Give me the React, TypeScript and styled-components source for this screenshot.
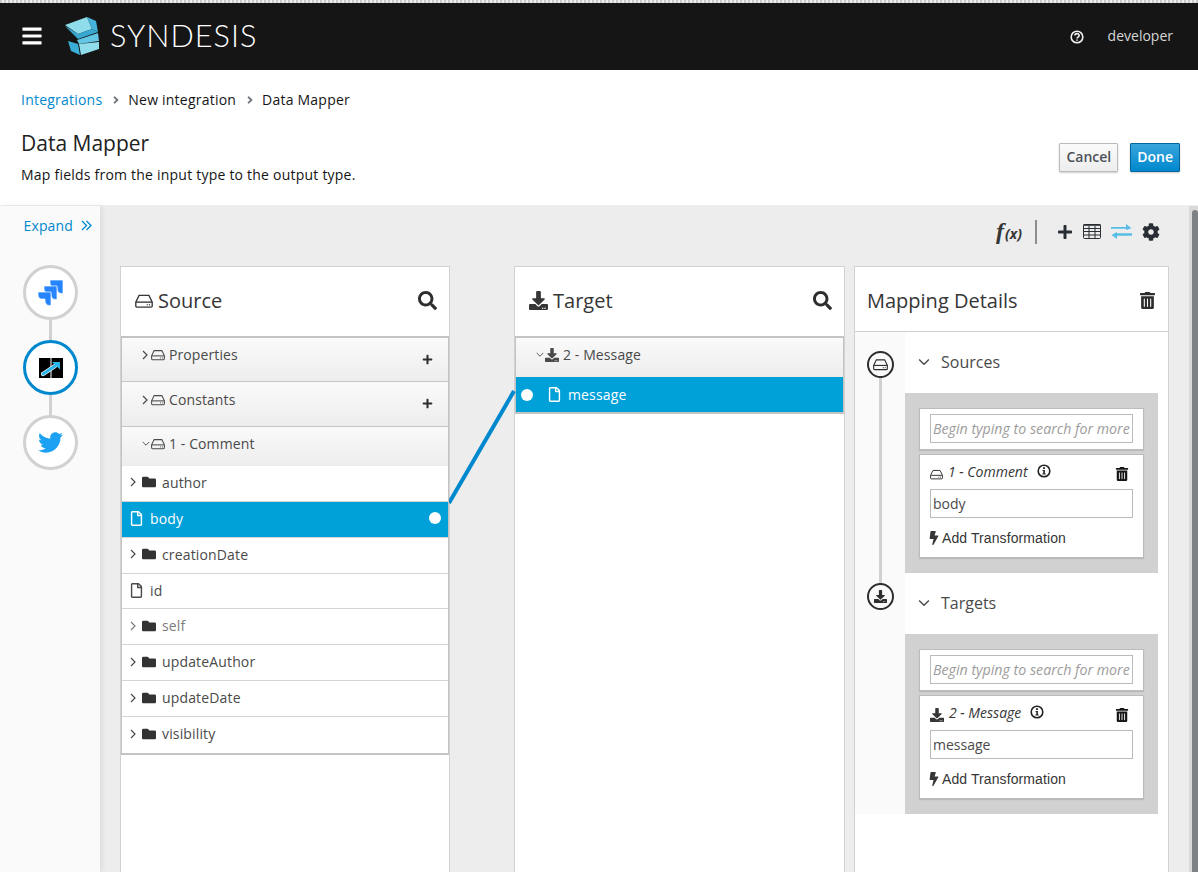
import React from "react";
import styled, { createGlobalStyle } from "styled-components";
import { FaBars, FaBolt, FaCog, FaDownload, FaFolder, FaPlus, FaRegFile, FaSearch, FaTrashAlt, FaTwitter, FaAngleRight } from "react-icons/fa";

const GlobalStyle = createGlobalStyle`
  html, body {
    margin: 0;
    height: 100%;
    overflow: hidden;
    background: #fff;
    font-family: "Open Sans", "Liberation Sans", sans-serif;
    color: #363636;
  }
  * { box-sizing: border-box; }
`;

const Page = styled.div`
  position: relative;
  width: 1198px;
  height: 872px;
  overflow: hidden;
  display: flex;
  flex-direction: column;
`;

const TopStrip = styled.div`
  height: 3px;
  background: repeating-linear-gradient(90deg, #c8c8c8 0 2px, #eeeeee 2px 4px);
`;

const NavBar = styled.header`
  height: 67px;
  flex: none;
  background: #151515;
  display: flex;
  align-items: center;
  padding: 0 25px 2px 21px;
  color: #fff;
`;

const Burger = styled.span`
  display: flex;
  font-size: 22px;
  margin-right: 21px;
`;

const Brand = styled.span`
  font-family: "Lato", "Open Sans", sans-serif;
  font-weight: 300;
  font-size: 30.7px;
  letter-spacing: 1px;
  margin-left: 10px;
  color: #fff;
`;

const NavRight = styled.div`
  margin-left: auto;
  display: flex;
  align-items: center;
  gap: 24px;
  font-size: 14px;
  color: #d6d6d6;
  svg { margin-top: 3px; }
`;

const PageHead = styled.div`
  height: 136px;
  flex: none;
  padding: 21px 18px 0 21px;
  border-bottom: 1px solid #f0f0f0;
`;

const Crumbs = styled.nav`
  display: flex;
  align-items: center;
  height: 18px;
  font-size: 14px;
  line-height: 18px;
  letter-spacing: 0.22px;
  color: #151515;
  svg { color: #72767b; font-size: 12px; margin: 0 6px 0 8px; }
`;

const CrumbLink = styled.a`
  color: #0088ce;
`;

const TitleRow = styled.div`
  display: flex;
  justify-content: space-between;
  align-items: flex-start;
  margin-top: 20px;
`;

const Title = styled.h1`
  margin: 0;
  font-size: 21px;
  line-height: 28px;
  font-weight: 400;
  color: #222;
`;

const Subtitle = styled.p`
  margin: 9px 0 0;
  font-size: 14px;
  line-height: 18px;
  letter-spacing: 0.22px;
  color: #151515;
`;

const Buttons = styled.div`
  display: flex;
  gap: 12px;
  margin-top: 14px;
`;

const Button = styled.button<{ $primary?: boolean }>`
  height: 29px;
  padding: 0 6px 2px;
  font: 600 14px "Open Sans", sans-serif;
  border-radius: 1px;
  border: 1px solid ${(p) => (p.$primary ? "#00659c" : "#bbb")};
  color: ${(p) => (p.$primary ? "#fff" : "#4d5258")};
  background: ${(p) => (p.$primary ? "linear-gradient(#39a5dc, #0088ce)" : "linear-gradient(#fafafa, #ededed)")};
  box-shadow: 0 1px 2px rgba(0, 0, 0, 0.2);
`;

const Body = styled.div`
  flex: 1;
  display: flex;
  min-height: 0;
`;

const Rail = styled.aside`
  width: 100px;
  flex: none;
  background: #fafafa;
  padding-top: 10px;
  display: flex;
  flex-direction: column;
  align-items: center;
  box-shadow: 2px 0 6px rgba(0, 0, 0, 0.08);
  z-index: 1;
`;

const Expand = styled.div`
  width: 100%;
  display: flex;
  align-items: center;
  justify-content: flex-end;
  gap: 8px;
  padding-right: 8px;
  height: 18px;
  font-size: 14px;
  letter-spacing: 0.15px;
  color: #0088ce;
  margin-bottom: 31px;
`;

const Step = styled.div<{ $active?: boolean }>`
  width: 55px;
  height: 55px;
  margin-left: 1px;
  border-radius: 50%;
  background: #fff;
  border: 3px solid ${(p) => (p.$active ? "#0088ce" : "#d1d1d1")};
  display: flex;
  align-items: center;
  justify-content: center;
`;

const StepLink = styled.div`
  width: 3px;
  height: 21px;
  margin-left: 1px;
  background: #d1d1d1;
  margin-top: -0.5px;
  margin-bottom: -0.5px;
`;

const Workspace = styled.main`
  flex: 1;
  background: #ededed;
  position: relative;
  min-width: 0;
`;

const Toolbar = styled.div`
  height: 60px;
  display: flex;
  align-items: center;
  justify-content: flex-end;
  padding: 0 38px 9px 0;
  color: #292e34;
`;

const Fx = styled.span`
  font: italic 700 24px "Liberation Serif", serif;
  display: flex;
  align-items: baseline;
  color: #363636;
  small { font: italic 700 14px "Open Sans", sans-serif; margin-left: 1px; }
`;

const ToolDivider = styled.span`
  width: 2px;
  height: 24px;
  background: #8b8d8f;
  margin: 0 20px 0 13px;
`;

const ToolIcons = styled.div`
  display: flex;
  align-items: center;
  gap: 10px;
`;

const Columns = styled.div`
  display: flex;
  align-items: flex-start;
  padding-left: 20px;
`;

const Panel = styled.section<{ $w: number; $ml?: number }>`
  width: ${(p) => p.$w}px;
  margin-left: ${(p) => p.$ml ?? 0}px;
  height: 640px;
  background: #fff;
  border: 1px solid #d1d1d1;
  flex: none;
`;

const PanelHead = styled.div<{ $h?: number; $pl?: number; $pt?: number; $pb?: number }>`
  height: ${(p) => p.$h ?? 69}px;
  display: flex;
  align-items: center;
  padding: ${(p) => p.$pt ?? 0}px 12px ${(p) => p.$pb ?? 2}px ${(p) => p.$pl ?? 14}px;
  font-size: 20px;
  color: #363636;
  gap: 5px;
`;

const HeadAction = styled.span`
  margin-left: auto;
  display: flex;
  color: #2e2e2e;
`;

const Tree = styled.div`
  border: 1px solid #c4c4c4;
  border-width: 2px 1px;
  background: #fff;
`;

const Group = styled.div<{ $h: number; $pt?: number; $last?: boolean }>`
  height: ${(p) => p.$h}px;
  background: linear-gradient(#fafafa, #ededed);
  border-bottom: ${(p) => (p.$last ? "none" : "1px solid #c4c4c4")};
  padding: ${(p) => p.$pt ?? 7}px 15px 0 20px;
  display: flex;
  align-items: flex-start;
  font-size: 14px;
  line-height: 20px;
  letter-spacing: 0.1px;
  color: #4a4a4a;
`;

const GroupIcon = styled.span<{ $open?: boolean }>`
  display: inline-flex;
  align-items: center;
  height: 20px;
  gap: ${(p) => (p.$open ? 1 : 3)}px;
  margin-right: 4px;
`;

const GroupPlus = styled.span<{ $mt: number }>`
  margin-left: auto;
  margin-top: ${(p) => p.$mt}px;
  display: flex;
  color: #2e2e2e;
`;

const FieldRow = styled.div<{ $selected?: boolean; $muted?: boolean; $h?: number; $pl?: number; $pb?: number }>`
  height: ${(p) => p.$h ?? 35.86}px;
  display: flex;
  align-items: center;
  font-size: 14px;
  letter-spacing: 0.15px;
  padding: 0 7px ${(p) => p.$pb ?? 2}px ${(p) => p.$pl ?? 8}px;
  gap: 7px;
  background: ${(p) => (p.$selected ? "#00a0d9" : "#fff")};
  color: ${(p) => (p.$selected ? "#fff" : p.$muted ? "#7b7b7b" : "#4a4a4a")};
  border-bottom: 1px solid #d4d4d4;
  &:last-child { border-bottom: none; }
`;

const Dot = styled.span<{ $right?: boolean }>`
  width: 12px;
  height: 12px;
  border-radius: 50%;
  background: #fff;
  flex: none;
  margin-left: ${(p) => (p.$right ? "auto" : "0")};
`;

const FolderGlyph = styled(FaFolder)`
  color: #333;
  font-size: 14px;
  margin-left: -1px;
  margin-right: -1px;
`;

const FileGlyph = styled(FaRegFile)<{ $ml?: number }>`
  font-size: 15px;
  margin: 0 -1px 0 ${(p) => p.$ml ?? -1}px;
`;

const DetailBody = styled.div`
  display: flex;
  height: 483px;
  border-top: 1px solid #d1d1d1;
`;

const Timeline = styled.div`
  width: 50px;
  flex: none;
  background: #fafafa;
  position: relative;
`;

const TimelineLine = styled.div`
  position: absolute;
  left: 24px;
  top: 30px;
  width: 3px;
  height: 226px;
  background: #d1d1d1;
`;

const TimelineNode = styled.span<{ $top: number }>`
  position: absolute;
  left: 12px;
  top: ${(p) => p.$top}px;
  width: 27px;
  height: 27px;
  border-radius: 50%;
  background: #fafafa;
  border: 2px solid #2e2e2e;
  display: flex;
  align-items: center;
  justify-content: center;
  color: #2e2e2e;
`;

const DetailColumn = styled.div`
  width: 253px;
`;

const SectionHead = styled.div`
  height: 61px;
  display: flex;
  align-items: center;
  padding: 0 0 2px 13px;
  gap: 11px;
  font-size: 16px;
  color: #4a4a4a;
`;

const GrayBox = styled.div`
  height: 180px;
  background: #d1d1d1;
  padding: 15px 14px;
`;

const Card = styled.div<{ $mt?: number; $h: number }>`
  background: #fff;
  border: 1px solid #bbb;
  height: ${(p) => p.$h}px;
  margin-top: ${(p) => p.$mt ?? 0}px;
  padding: 5px 10px;
  box-shadow: 0 1px 1px rgba(0, 0, 0, 0.1);
`;

const FieldBox = styled.div<{ $placeholder?: boolean }>`
  height: 29px;
  border: 1px solid #bbb;
  padding: 0 2px 1px;
  display: flex;
  align-items: center;
  white-space: nowrap;
  overflow: hidden;
  font-size: ${(p) => (p.$placeholder ? "14.2px" : "14px")};
  font-style: ${(p) => (p.$placeholder ? "italic" : "normal")};
  color: ${(p) => (p.$placeholder ? "#9c9c9c" : "#4a4a4a")};
`;

const DocRow = styled.div`
  height: 29px;
  display: flex;
  align-items: center;
  padding-bottom: 6px;
  font-size: 14px;
  font-style: italic;
  color: #363636;
  i { font-style: inherit; margin: 0 9px 0 5px; }
`;

const DocIcon = styled.span`
  display: flex;
  margin-top: 5px;
`;

const DocInfo = styled.span`
  display: flex;
  margin-top: -2px;
`;

const DocTrash = styled.span`
  margin-left: auto;
  margin-right: 4px;
  margin-top: 4px;
  display: flex;
  color: #151515;
`;

const AddTransform = styled.div`
  display: flex;
  align-items: center;
  gap: 1px;
  height: 20px;
  margin-top: 10px;
  font: 14px "Liberation Sans", sans-serif;
  letter-spacing: 0.1px;
  color: #363636;
  svg { margin-left: -3px; }
`;

const Scrollbar = styled.div`
  position: absolute;
  right: 0;
  top: 0;
  bottom: 0;
  width: 9px;
  background: #d9d9d9;
  &::after {
    content: "";
    display: block;
    margin: 4px 0 0 3px;
    width: 6px;
    height: 100%;
    border-radius: 4px 4px 0 0;
    background: #7e8284;
  }
`;

const Connector = styled.svg`
  position: absolute;
  left: 349px;
  top: 182px;
  pointer-events: none;
`;

const Drive = ({ size = 15 }: { size?: number }) => (
  <svg width={size} height={size} viewBox="0 0 16 16" fill="none" stroke="currentColor" strokeWidth="1.2">
    <path d="M3.6 3h8.8l2.9 6v3.4a1 1 0 0 1-1 1H1.7a1 1 0 0 1-1-1V9z" />
    <path d="M.8 9h14.4" />
    <path d="M10.5 11.3h.8M12.6 11.3h.8" strokeWidth="1.4" />
  </svg>
);

const ChevronRight = () => (
  <svg width="6" height="10" viewBox="0 0 6 10" fill="none" stroke="currentColor" strokeWidth="1.2">
    <path d="M1 1l4 4-4 4" />
  </svg>
);

const ChevronDown = ({ w = 8 }: { w?: number }) => (
  <svg width={w} height={w * 0.65} viewBox="0 0 12 8" fill="none" stroke="currentColor" strokeWidth="1.4">
    <path d="M1 1.5l5 5 5-5" />
  </svg>
);

const DoubleChevron = () => (
  <svg width="11" height="11" viewBox="0 0 11 11" fill="none" stroke="currentColor" strokeWidth="1.3">
    <path d="M1 1l4.5 4.5L1 10M5.5 1L10 5.5 5.5 10" />
  </svg>
);

const Info = () => (
  <svg width="14" height="14" viewBox="0 0 14 14">
    <circle cx="7" cy="7" r="5.8" fill="none" stroke="#222" strokeWidth="1.6" />
    <rect x="6.1" y="3.2" width="1.8" height="1.8" fill="#222" />
    <path d="M5.6 6h2.3v3.4h.8v1H5.4v-1h.9V7h-.7z" fill="#222" />
  </svg>
);

const Question = () => (
  <svg width="14" height="14" viewBox="0 0 13 13" fill="none" stroke="#f0f0f0" strokeWidth="1.5">
    <circle cx="6.5" cy="6.5" r="5.4" />
    <path d="M4.6 5.2c0-2.4 3.9-2.4 3.9 0 0 1.4-2 1.3-2 2.7" />
    <path d="M6.5 8.8v1.2" />
  </svg>
);

const Logo = () => (
  <svg width="36" height="38" viewBox="0 0 36 38">
    <polygon points="1,8 23,0 28,12 14,17" fill="#8fdcea" />
    <polygon points="23,0 32,4 34,15 28,12" fill="#46b4da" />
    <polygon points="1,9 14,17 28,12 34,15 14,22" fill="#38a8d2" />
    <polygon points="13,23 34,16 35,24 15,27" fill="#62c6e4" />
    <polygon points="4,24 14,27 16,38 7,34" fill="#3aaed6" />
    <polygon points="15,27 35,25 35,32 17,38" fill="#8fdcea" />
  </svg>
);

const JiraPiece = ({ x, y }: { x: number; y: number }) => (
  <path
    transform={`translate(${x} ${y})`}
    d="M0 0H13V13.5H11.5C9 13.5 7 11.5 7 9V7H3.5C1.5 7 0 5 0 3z"
    fill="#2684ff"
    stroke="#fff"
    strokeWidth="0.7"
  />
);

const JiraMark = () => (
  <svg width="25" height="26" viewBox="0 0 25 26">
    <JiraPiece x={12} y={0} />
    <JiraPiece x={6} y={6} />
    <JiraPiece x={0} y={12} />
  </svg>
);

const MapperMark = () => (
  <svg width="24" height="20" viewBox="0 0 24 20">
    <path d="M0 0h11.5v20H0zM12.5 0H24v20H12.5z" fill="#000" />
    <path d="M4 16 16 8" stroke="#fff" strokeWidth="4.2" strokeLinecap="round" />
    <path d="M4 16 16 8" stroke="#29b6ea" strokeWidth="3" strokeLinecap="round" />
    <path d="M13 4h8v7.5z" fill="#29b6ea" />
  </svg>
);

const TableGlyph = () => (
  <svg width="18" height="15" viewBox="0 0 18 15" fill="none" stroke="#292e34" strokeWidth="1">
    <rect x="0.5" y="0.5" width="17" height="14" rx="1" />
    <path d="M0.5 1h17" strokeWidth="1.6" />
    <path d="M0.5 4.5h17M0.5 7.5h17M0.5 11h17M6 2v12.5M12 2v12.5" />
  </svg>
);

const SwapGlyph = () => (
  <svg width="21" height="15" viewBox="0 0 21 15" fill="#57bde6">
    <path d="M0 3h15V0l5.5 4.2L15 6V4.8H0zM21 9.2H6V8L.5 11 6 15v-3.2h15z" />
  </svg>
);

const sourceFields = [
  { name: "author", folder: true },
  { name: "body", selected: true },
  { name: "creationDate", folder: true },
  { name: "id" },
  { name: "self", folder: true, muted: true },
  { name: "updateAuthor", folder: true },
  { name: "updateDate", folder: true },
  { name: "visibility", folder: true },
];

const DetailCards = ({ doc, field, icon }: { doc: string; field: string; icon: React.ReactNode }) => (
  <GrayBox>
    <Card $h={42}>
      <FieldBox $placeholder>Begin typing to search for more</FieldBox>
    </Card>
    <Card $mt={4} $h={104}>
      <DocRow>
        <DocIcon>{icon}</DocIcon>
        <i>{doc}</i>
        <DocInfo>
          <Info />
        </DocInfo>
        <DocTrash>
          <FaTrashAlt size={14} />
        </DocTrash>
      </DocRow>
      <FieldBox>{field}</FieldBox>
      <AddTransform>
        <FaBolt size={14} />
        Add Transformation
      </AddTransform>
    </Card>
  </GrayBox>
);

export default function App() {
  return (
    <Page>
      <GlobalStyle />
      <TopStrip />
      <NavBar>
        <Burger>
          <FaBars />
        </Burger>
        <Logo />
        <Brand>SYNDESIS</Brand>
        <NavRight>
          <Question />
          <span>developer</span>
        </NavRight>
      </NavBar>
      <PageHead>
        <Crumbs>
          <CrumbLink>Integrations</CrumbLink>
          <FaAngleRight />
          New integration
          <FaAngleRight />
          Data Mapper
        </Crumbs>
        <TitleRow>
          <div>
            <Title>Data Mapper</Title>
            <Subtitle>Map fields from the input type to the output type.</Subtitle>
          </div>
          <Buttons>
            <Button>Cancel</Button>
            <Button $primary>Done</Button>
          </Buttons>
        </TitleRow>
      </PageHead>
      <Body>
        <Rail>
          <Expand>
            Expand <DoubleChevron />
          </Expand>
          <Step>
            <JiraMark />
          </Step>
          <StepLink />
          <Step $active>
            <MapperMark />
          </Step>
          <StepLink />
          <Step>
            <FaTwitter size={25} color="#1da1f2" />
          </Step>
        </Rail>
        <Workspace>
          <Toolbar>
            <Fx>
              f<small>(x)</small>
            </Fx>
            <ToolDivider />
            <ToolIcons>
              <FaPlus size={16} />
              <TableGlyph />
              <SwapGlyph />
              <FaCog size={18} />
            </ToolIcons>
          </Toolbar>
          <Columns>
            <Panel $w={330}>
              <PanelHead>
                <Drive size={18} />
                Source
                <HeadAction>
                  <FaSearch size={19} />
                </HeadAction>
              </PanelHead>
              <Tree>
                <Group $h={44}>
                  <GroupIcon>
                    <ChevronRight />
                    <Drive size={14} />
                  </GroupIcon>
                  Properties
                  <GroupPlus $mt={9}>
                    <FaPlus size={11} />
                  </GroupPlus>
                </Group>
                <Group $h={45} $pt={8}>
                  <GroupIcon>
                    <ChevronRight />
                    <Drive size={14} />
                  </GroupIcon>
                  Constants
                  <GroupPlus $mt={8}>
                    <FaPlus size={11} />
                  </GroupPlus>
                </Group>
                <Group $h={39} $last>
                  <GroupIcon $open>
                    <ChevronDown />
                    <Drive size={14} />
                  </GroupIcon>
                  1 - Comment
                </Group>
                {sourceFields.map((f) => (
                  <FieldRow key={f.name} $selected={f.selected} $muted={f.muted}>
                    {f.folder ? (
                      <>
                        <ChevronRight />
                        <FolderGlyph />
                      </>
                    ) : (
                      <FileGlyph />
                    )}
                    {f.name}
                    {f.selected && <Dot $right />}
                  </FieldRow>
                ))}
              </Tree>
            </Panel>
            <Panel $w={331} $ml={64}>
              <PanelHead>
                <FaDownload size={19} />
                Target
                <HeadAction>
                  <FaSearch size={19} />
                </HeadAction>
              </PanelHead>
              <Tree>
                <Group $h={39} $last>
                  <GroupIcon $open>
                    <ChevronDown />
                    <FaDownload size={14} />
                  </GroupIcon>
                  2 - Message
                </Group>
                <FieldRow $selected $h={35} $pl={5} $pb={0}>
                  <Dot />
                  <FileGlyph $ml={7} />
                  message
                </FieldRow>
              </Tree>
            </Panel>
            <Panel $w={315} $ml={9}>
              <PanelHead $h={64} $pl={12} $pt={2} $pb={0}>
                Mapping Details
                <HeadAction>
                  <FaTrashAlt size={17} />
                </HeadAction>
              </PanelHead>
              <DetailBody>
                <Timeline>
                  <TimelineLine />
                  <TimelineNode $top={19}>
                    <Drive size={15} />
                  </TimelineNode>
                  <TimelineNode $top={251}>
                    <FaDownload size={13} />
                  </TimelineNode>
                </Timeline>
                <DetailColumn>
                  <SectionHead>
                    <ChevronDown w={12} />
                    Sources
                  </SectionHead>
                  <DetailCards doc="1 - Comment" field="body" icon={<Drive size={13} />} />
                  <SectionHead>
                    <ChevronDown w={12} />
                    Targets
                  </SectionHead>
                  <DetailCards doc="2 - Message" field="message" icon={<FaDownload size={14} />} />
                </DetailColumn>
              </DetailBody>
            </Panel>
          </Columns>
          <Connector width="70" height="120">
            <line x1="0" y1="115" x2="65" y2="3" stroke="#0088ce" strokeWidth="4" />
          </Connector>
          <Scrollbar />
        </Workspace>
      </Body>
    </Page>
  );
}
